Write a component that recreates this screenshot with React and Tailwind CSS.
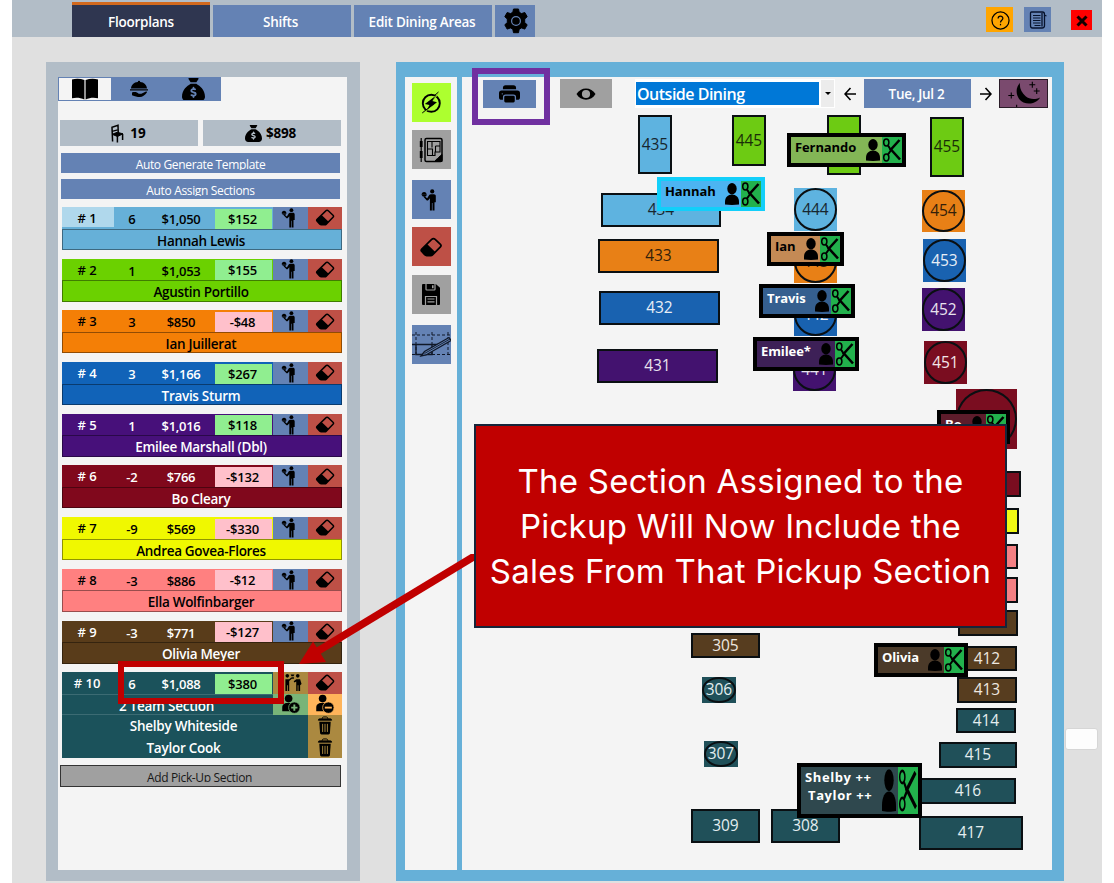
import React from "react";
import { FaSackDollar } from "react-icons/fa6";
import { BsPrinterFill } from "react-icons/bs";

const Waiter = ({ className }) => (
  <svg viewBox="0 0 16 22" className={className} fill="#000">
    <circle cx="11.2" cy="2.4" r="2.1" />
    <path d="M.5 5.700c.1-1.700 1-2.700 2.600-2.800 1.600.1 2.500 1.100 2.600 2.800z" />
    <path d="M.5 5.700h5.400l-1 1.700H1.800z" />
    <path d="M3.200 7l3 2.300 2-3.200c.4-.6 1-.9 1.700-.9h3c1.200 0 1.900.7 1.900 1.900v6.200h-1.300V21.500h-2V14h-.6v7.500h-2V9.200L7 11.400H5.800L2.600 8z" />
  </svg>
);
const Eraser = ({ className }) => (
  <svg viewBox="0 0 24 21" className={className}>
    <path d="M12.700 2.600 2.300 12.700c-.8.800-.8 1.700 0 2.500l3.300 3.500c.5.600 1.100.8 1.800.8h4.400c.7 0 1.300-.3 1.800-.8l8.300-8.400c.8-.8.8-1.800 0-2.600l-5.500-5.200c-1.100-1-2.600-1-3.700.100z" fill="none" stroke="#000" strokeWidth="1.800" strokeLinejoin="round" />
    <path d="M7.800 7.300 2.300 12.700c-.8.800-.8 1.700 0 2.500l3.300 3.500c.5.600 1.100.8 1.800.8h4.400c.7 0 1.300-.3 1.800-.8l2.900-2.900z" fill="#000" />
  </svg>
);
const Gear = () => (
  <svg viewBox="0 0 26 26" className="h-[26px] w-[26px]">
    <path d="M10.500 1h5l.7 3.300 2.300 1.300 3.300-1.100 2.400 4.200-2.500 2.300v3.600l2.500 2.200-2.400 4.300-3.300-1.200-2.300 1.300-.7 3.500h-5l-.7-3.500-2.300-1.300-3.300 1.200-2.400-4.300 2.500-2.200V11L1.800 8.700l2.400-4.200 3.300 1.100 2.300-1.300z" fill="#000" strokeLinejoin="round" stroke="#000" strokeWidth="1" />
    <circle cx="13" cy="13" r="4.400" fill="none" stroke="#6482b4" strokeWidth="1.200" />
  </svg>
);
const Book = () => (
  <svg viewBox="0 0 28 22" className="h-[22px] w-[28px]">
    <path d="M1 1.500C5 .2 9.500.5 13.400 2v19.500C9.500 19.700 5 19.400 1 20.300zM27 1.500C23 .2 18.500.5 14.600 2v19.500c3.900-1.800 8.400-2.100 12.400-1.200z" />
  </svg>
);
const Dish = () => (
  <svg viewBox="0 0 20 18" className="h-[18px] w-[20px]">
    <path d="M2 8.500C2.300 4.800 5 2.300 8.800 2a1.200 1.200 0 0 1 2.400 0c3.800.3 6.500 2.800 6.800 6.500zM1 9.300h18v1.200H1zM3 12.500c3-.9 5-.4 6.700 1.200h2.600l4.700-2.200c.9 0 1.200.6.700 1.200-1.900 2.300-4.200 4.300-6.700 4.300-2.800 0-5.200-.8-8-1.800z" />
  </svg>
);
const Chair = () => (
  <svg viewBox="0 0 14 19" className="h-[19px] w-[14px]" fill="none" stroke="#000">
    <path d="M2.600 17.500 2 3.300 8 1.200l.3 9" strokeWidth="1.500" />
    <path d="M2 7.300 7.800 5.800" strokeWidth="1.200" />
    <path d="m2.200 10.300 5-2 5.800 1.500-5.500 2.700z" fill="#000" strokeWidth="1" />
    <path d="M7.400 12v6.500M12.600 10v6" strokeWidth="1.500" />
  </svg>
);
const Eye = () => (
  <svg viewBox="0 0 20 14" className="h-[14px] w-[20px]">
    <path d="M.5 7C4.500-.5 15.500-.5 19.500 7c-4 7.500-15 7.500-19 0z" />
    <circle cx="10" cy="7" r="4.100" fill="#a0a0a0" />
    <circle cx="10" cy="7" r="1.300" fill="#a0a0a0" />
  </svg>
);
const Flash = () => (
  <svg viewBox="0 0 24 24" className="h-[24px] w-[24px]">
    <circle cx="12.300" cy="12.300" r="8.500" fill="none" stroke="#000" strokeWidth="1.900" />
    <path d="M20.500 1.500 8 12.800l3.800.9L4 22.500 17.300 12l-4.500-1z" stroke="#adff2f" strokeWidth=".8" />
    <path d="M15.500 5.800 5.800 13l4.700 1.100-2.300 4.200 9.800-7-4.800-1.400z" />
    <path d="m15 5 4.500-4M8.700 17.500 3.200 22" stroke="#000" strokeWidth="1" />
  </svg>
);
const Plan = () => (
  <svg viewBox="0 0 26 26" className="h-[26px] w-[26px]" fill="none" stroke="#000">
    <path d="M3.200 1v24" strokeWidth="1.200" />
    <path d="M3.200 4v6M3.200 14v7" strokeWidth="2.800" />
    <rect x="7" y="1.500" width="17" height="23" rx="1.500" strokeWidth="1.500" />
    <path d="M9.500 4.500h12.500v10.500h-5v3.500H9.500zM14 4.500v6M9.500 12h5v6M17.500 9v6M17.500 9h4.500" strokeWidth="1.100" />
    <path d="M24 17.500v7h-7c1-3 3.500-2.800 4-4.500z" fill="#000" />
  </svg>
);
const Floppy = () => (
  <svg viewBox="0 0 20 23" className="h-[23px] w-[20px]">
    <path d="M1 2.300C1 1.400 1.500 1 2.300 1h12.500L19 4.800v15.900c0 .9-.5 1.300-1.300 1.300H2.300C1.500 22 1 21.600 1 20.700z" />
    <path d="M5 1v5.200c0 .5.300.8.800.8h7.400c.5 0 .8-.3.800-.8V1" fill="none" stroke="#a0a0a0" strokeWidth="1.200" />
    <path d="M11 2.200h1.600v3H11z" fill="#a0a0a0" />
    <path d="M4.500 22v-8.500h11V22M6.500 16h7M6.500 18.800h7" fill="none" stroke="#a0a0a0" strokeWidth="1.200" />
  </svg>
);
const DrawPlan = () => (
  <svg viewBox="0 0 39 39" className="h-[39px] w-[39px]" fill="none" stroke="#101828">
    <path d="M0 10h39M0 29.500h39M4 7v25M20 7v25M36 7v25" strokeWidth="1" strokeDasharray="3 2" />
    <path d="M0 19.500h28M4 19.500v10h16V19.500" strokeWidth="1.400" />
    <path d="M9 31l3.500-4.500L37 12.500l2 3L14 30z" fill="#6482b4" strokeWidth="1.300" />
    <path d="M12.500 28.500 38 14" strokeWidth=".9" />
  </svg>
);
const Moon = () => (
  <svg viewBox="0 0 48 28" className="h-[28px] w-[48px]">
    <path d="M20.500 2.500c-4.500 4.500-4.500 12-1 16.500 5 6.500 16.500 6.500 21.500-1.500-5 2.500-11 2.200-14.800-1.200C22 12.300 19.500 7.500 20.500 2.500z" />
    <path d="M11.500 12.500v6M8.500 15.500h6M33 1.500v6M30 4.500h6M37.500 8v6M34.500 11h6M17 25v3" stroke="#000" strokeWidth="1.100" />
  </svg>
);
const Person = ({ className }) => (
  <svg viewBox="0 0 14 23" preserveAspectRatio="none" className={className}>
    <ellipse cx="7" cy="6" rx="4.700" ry="5.900" />
    <path d="M0 22.500v-3C0 15 3 12 7 12s7 3 7 7.500v3C10 23 4 23 0 22.500z" />
  </svg>
);
const Scissors = ({ className }) => (
  <svg viewBox="0 0 20 26" preserveAspectRatio="none" className={className} fill="none" stroke="#000">
    <ellipse cx="4.300" cy="5.500" rx="2.600" ry="3.400" strokeWidth="1.500" />
    <ellipse cx="4.300" cy="20.500" rx="2.600" ry="3.400" strokeWidth="1.500" />
    <path d="m6 8.500 3.500 5.500M6 17.500l3.500-5" strokeWidth="2" />
    <path d="M8 13.500 17.500 3M8.500 12 18 22.500" strokeWidth="2.600" />
  </svg>
);
const Trash = () => (
  <svg viewBox="0 0 16 20" className="h-[19px] w-[16px]">
    <path d="M1 4.500c0-1 .5-1.500 1.500-1.500h11c1 0 1.500.5 1.500 1.500z" fill="#000" stroke="#000" strokeWidth=".8" />
    <path d="M5 3c0-1.300.6-2 1.800-2h2.400C10.400 1 11 1.700 11 3" fill="none" stroke="#000" strokeWidth="1" />
    <path d="M2 6h12l-.8 12c-.1.900-.6 1.400-1.500 1.400H4.300c-.9 0-1.400-.5-1.500-1.400z" />
    <path d="M5.500 8.300v8.500M8 8.300v8.500M10.500 8.300v8.500" stroke="#ab8940" strokeWidth="1" />
  </svg>
);
const UserBadge = ({ minus, color }) => (
  <svg viewBox="0 0 20 21" className="h-[20px] w-[20px]">
    <circle cx="7.500" cy="4.800" r="4" />
    <path d="M.8 18v-3.500C.8 11 3 9.500 6 9.500h3.500c3 0 4.700 1.500 4.700 5V18z" />
    <circle cx="13.500" cy="14.300" r="6" stroke={color} strokeWidth=".8" />
    <path d={minus ? "M9.800 14.300h7.400" : "M10.200 14.300h6.600M13.500 11v6.600"} stroke={color} strokeWidth="2" />
  </svg>
);
const Team = () => (
  <svg viewBox="0 0 20 20" className="h-[19px] w-[20px]">
    <circle cx="4" cy="3" r="1.900" /><circle cx="15" cy="3" r="1.900" />
    <path d="M2 6.500h4l2.500-2 .8 1-3.300 3V19h-1.500v-6h-.8v6H2zM17.500 6.500h-4l-2.800 2.200.8 1.300 1.900-1V19h1.500v-6h.8v6h1.800v-6l1.500-1.500z" />
    <path d="M7.500 1.500h4L10.500 3.500h-2zM9 4.500h2v1.500H9z" />
  </svg>
);

const sections = [
  ["# 1", "6", "$1,050", "$152", "Hannah Lewis", "bg-[#66b0d8] text-black"],
  ["# 2", "1", "$1,053", "$155", "Agustin Portillo", "bg-[#6bd100] text-black"],
  ["# 3", "3", "$850", "-$48", "Ian Juillerat", "bg-[#f47f06] text-black"],
  ["# 4", "3", "$1,166", "$267", "Travis Sturm", "bg-[#1163b8] text-white"],
  ["# 5", "1", "$1,016", "$118", "Emilee Marshall (Dbl)", "bg-[#47107a] text-white"],
  ["# 6", "-2", "$766", "-$132", "Bo Cleary", "bg-[#80081c] text-white"],
  ["# 7", "-9", "$569", "-$330", "Andrea Govea-Flores", "bg-[#f0f800] text-black"],
  ["# 8", "-3", "$886", "-$12", "Ella Wolfinbarger", "bg-[#ff8080] text-black"],
  ["# 9", "-3", "$771", "-$127", "Olivia Meyer", "bg-[#593c1a] text-white"],
];

function SectionHead({ s, team, first }) {
  return (
    <div className="flex h-[21.5px] leading-[21px]">
      <div className={"w-[52px] shrink-0 pr-[2px] pt-px text-center " + (first ? "h-[20px] bg-[#b0d8ec]" : "")}>{s[0]}</div>
      <div className="w-[36px] shrink-0 pt-0.5 text-center">{s[1]}</div>
      <div className="w-[65px] shrink-0 pr-[3px] pt-0.5 text-center tracking-[-0.3px]">{s[2]}</div>
      <div className={"mt-[1.500px] h-[20px] w-[57px] shrink-0 pr-[2px] text-center text-black tracking-[-0.2px] " + (s[3][0] === "-" ? "bg-[#ffc0cb]" : "bg-[#90ee90]")}>{s[3]}</div>
      <div className={"ml-[1px] flex w-[35px] shrink-0 items-center justify-center " + (team ? "bg-[#ab8940] pl-1" : "bg-[#6482b4] pr-1")}>
        {team ? <Team /> : <Waiter className="h-[20px] w-[15px]" />}
      </div>
      <div className="flex flex-1 items-center justify-center bg-[#be5046]"><Eraser className="mr-px h-[17px] w-[20px]" /></div>
    </div>
  );
}

const B = "bg-[#5eb3e0] text-[#17262e]", G = "bg-[#6dcb13] text-[#1a2e08]", O = "bg-[#e88016] text-[#33200a]",
  N = "bg-[#1962b0] text-[#e8eef6]", P = "bg-[#43126f] text-[#e8e2ee]", M = "bg-[#7a0d20] text-[#f2e6e8]",
  Y = "bg-[#f0f814]", K = "bg-[#f48084]", W = "bg-[#573d1f] text-[#eee8e0]", T = "bg-[#205059] text-[#e4eef0]";
/* label, x, y, width, height, colour, round */
const tables = [
  ["435", 638, 115, 34, 59, B], ["445", 732, 115, 34, 51, G], ["", 827, 115, 34, 60, G], ["455", 930, 117, 34, 60, G],
  ["434", 601, 193, 120, 34, B], ["433", 598, 239, 121, 34, O], ["432", 599, 291, 121, 34, N], ["431", 597, 349, 121, 34, P],
  ["444", 794, 188, 43, 43, B, 1], ["443", 794, 240, 43, 43, O, 1], ["442", 794, 293, 43, 43, N, 1], ["441", 793, 348, 43, 43, P, 1],
  ["454", 922, 190, 43, 42, O, 1], ["453", 923, 239, 43, 43, N, 1], ["452", 922, 288, 43, 43, P, 1], ["451", 924, 341, 43, 43, M, 1],
  ["", 956, 389, 61, 60, M, 1], ["", 960, 471, 61, 26, M], ["", 959, 508, 60, 26, Y], ["", 958, 544, 60, 25, K], ["", 958, 577, 60, 26, K],
  ["411", 958, 610, 60, 26, W], ["412", 957, 646, 60, 25, W], ["413", 957, 677, 60, 26, W], ["414", 956, 708, 60, 25, T],
  ["415", 939, 742, 78, 26, T], ["416", 920, 778, 96, 26, T], ["417", 919, 816, 104, 34, T],
  ["305", 691, 633, 69, 25, W], ["306", 702, 677, 34, 26, T, 1], ["307", 704, 741, 34, 26, T, 1],
  ["309", 691, 809, 69, 34, T], ["308", 771, 809, 69, 34, T],
];
const tags = [
  [["Fernando"], 787, 133, 119, 34, "border-black bg-[#83b656] text-black"],
  [["Hannah"], 657, 177, 108, 34, "border-[#12cffa] bg-[#4cb4f2] text-black"],
  [["Ian"], 767, 232, 77, 34, "border-black bg-[#c48a55] text-black"],
  [["Travis"], 759, 284, 96, 34, "border-black bg-[#355f8f] text-white"],
  [["Emilee*"], 753, 337, 106, 34, "border-black bg-[#3d2057] text-white"],
  [["Bo"], 937, 410, 73, 34, "border-black bg-[#5d1c2b] text-white"],
  [["Olivia"], 874, 643, 94, 34, "border-black bg-[#4b3a29] text-white"],
  [["Shelby ++", "Taylor ++"], 797, 763, 125, 55, "border-black bg-[#2f484e] text-white"],
];

function FloorMap() {
  return (
    <div className="absolute inset-0">
      {tables.map(([n, x, y, w, h, c, round], i) => (
        <div key={i} style={{ left: x - 462, top: y - 77, width: w, height: h }}
          className={"absolute flex items-center justify-center text-[15.500px] tracking-[-0.1px] " + c + (round ? "" : " border-2 border-[#0a0f12]")}>
          {round ? <div className="absolute inset-0 rounded-[50%] border-2 border-[#0a0f12]" /> : null}
          <span className="relative">{n}</span>
        </div>
      ))}
      {tags.map(([names, x, y, w, h, c]) => (
        <div key={names[0]} style={{ left: x - 462, top: y - 77, width: w, height: h }}
          className={"absolute flex border-4 text-[13px] font-bold leading-[18px] " + c}>
          <div className={"flex-1 whitespace-pre pl-[4px] pt-px text-left " + (names[1] ? "tracking-[0.6px]" : "tracking-[-0.1px]")}>
            {names.map((n, i) => <div key={n} className={i ? "pl-[3px]" : ""}>{n}</div>)}
          </div>
          <div className="flex w-[16px] shrink-0 py-0.5"><Person className="h-full w-[14px]" /></div>
          <div className="w-[20px] shrink-0 bg-[#22b14c]"><Scissors className="h-full w-full" /></div>
        </div>
      ))}
    </div>
  );
}

const tab = "flex h-[32px] w-[138px] items-center justify-center bg-[#6482b4] pt-[2px]";
const tool = "flex h-[39px] w-[39px] items-center justify-center ";
const clipped = "h-[16.500px] overflow-hidden pt-[2px] text-center text-[12px] leading-[20px] tracking-[-0.35px] ";

export default function App() {
  return (
    <div className="relative flex h-[883px] w-[1114px] justify-center overflow-hidden bg-white font-['Open_Sans','Noto_Sans',sans-serif]">
      <div className="flex w-[1090px] flex-col bg-[#e0e0e0]">
        <header className="flex h-[37px] shrink-0 justify-between bg-[#b2bdc7] pl-[60px] pr-[10px]">
          <nav className="flex items-end text-[13.500px] font-semibold tracking-[-0.25px] text-white">
            <div className="mr-[3px] flex h-[35px] w-[138px] items-center justify-center border-t-[3px] border-[#d2691e] bg-[#2f3650] pt-[2px]">Floorplans</div>
            <div className={tab + " mr-[3px] pr-[3px]"}>Shifts</div>
            <div className={tab + " mr-[3px] whitespace-nowrap pr-[2px]"}>Edit Dining Areas</div>
            <div className="flex h-[32px] w-[40px] items-center justify-center bg-[#6482b4] pl-px"><Gear /></div>
          </nav>
          <div className="flex pt-[7px]">
            <div className="mr-[11px] flex h-[25px] w-[27px] items-center justify-center bg-[#ffa500] pt-px pl-px">
              <svg viewBox="0 0 20 20" className="h-[19px] w-[19px]" fill="none" stroke="#000" strokeWidth="1.300"><circle cx="10" cy="10" r="9" /><path d="M7.500 8c0-3.500 5-3.300 5-.3 0 2-2.500 2-2.500 4.300" /><path d="M10 13.500v1.600" /></svg>
            </div>
            <div className="mr-[20px] flex h-[25px] w-[27px] items-center justify-center bg-[#6482b4]">
              <svg viewBox="0 0 18 18" className="h-[18px] w-[18px]" fill="none" stroke="#07122c" strokeWidth="1.300"><path d="M2.500 1h11c1.500 0 2 1 2 2.500v11c0 1.700-1 2.500-2.500 2.500H3.500C2 17 1.500 16 1.500 14.500V2c0-.6.400-1 1-1z" /><path d="M13 2v13.500M15 4l2.500 1" /><path d="M4 4.500h7.500M4 7h7.500M4 9.500h7.500M4 12h7.500M5.500 14.500h6" strokeWidth="1.100" /></svg>
            </div>
            <div className="mt-[3px] flex h-[20px] w-[21px] items-center justify-center bg-[#ff0000] pt-[2px]">
              <svg viewBox="0 0 12 12" className="h-[12px] w-[12px]" stroke="#100" strokeWidth="3"><path d="m1.500 1.500 9 9M10.500 1.500l-9 9" /></svg>
            </div>
          </div>
        </header>

        <main className="flex flex-1 pl-[34px] pt-[25px]">
          <aside className="flex h-[819px] w-[314px] flex-col border-b-[11px] border-l-[12px] border-r-[13px] border-t-[15px] border-[#b2bdc7] bg-[#f4f4f4]">
            <div className="flex h-[24px] w-[163px] border border-[#6482b4] bg-[#6482b4]">
              <div className="flex w-[52px] justify-center bg-[#f4f4f4]"><Book /></div>
              <div className="flex w-[56px] items-center justify-center"><Dish /></div>
              <div className="flex w-[53px] justify-center overflow-hidden"><FaSackDollar className="h-[23px] w-[23px] shrink-0 text-black" /></div>
            </div>
            <div className="mt-[19px] flex gap-[5px] pl-[2px] text-[13.500px] font-bold text-black">
              <div className="flex h-[26px] w-[138px] items-center justify-center gap-[6px] bg-[#b2bdc7] pr-[2px] pt-px"><Chair />19</div>
              <div className="flex h-[26px] w-[138px] items-center justify-center gap-[4px] bg-[#b2bdc7] pr-[3px] pt-px tracking-[-0.2px]"><FaSackDollar className="h-[17px] w-[17px]" />$898</div>
            </div>
            <div className="ml-[3px] mt-[7px] h-[20px] w-[279px] bg-[#6482b4]">
              <div className={clipped + "text-white"}>Auto Generate Template</div>
            </div>
            <div className="ml-[3px] mt-[6px] h-[20px] w-[279px] bg-[#6482b4]">
              <div className={clipped + "text-white"}>Auto Assign Sections</div>
            </div>
            <div className="ml-[4px] mt-[8px] flex w-[280px] flex-col gap-[8.700px] text-[13px] font-semibold">
              {sections.map((s, i) => (
                <section key={s[0]} className={"h-[43px] " + s[5]}>
                  <SectionHead s={s} first={i === 0} />
                  <div className="h-[21.500px] border border-black/40 pr-[2px] text-center text-[13.500px] leading-[22px] tracking-[-0.3px]">{s[4]}</div>
                </section>
              ))}
              <section className="h-[86px] bg-[#1b525b] text-[13.500px] tracking-[-0.25px] text-white">
                <div className="text-[13px] tracking-normal"><SectionHead s={["# 10", "6", "$1,088", "$380"]} team /></div>
                <div className="flex h-[21.500px]">
                  <div className="flex-1 border-y border-white/15 pr-[2px] text-center leading-[22px]">2 Team Section</div>
                  <div className="flex w-[35px] items-center justify-center bg-[#78b478]"><UserBadge color="#78b478" /></div>
                  <div className="flex w-[34px] items-center justify-center bg-[#ffb45a]"><UserBadge minus color="#ffb45a" /></div>
                </div>
                {["Shelby Whiteside", "Taylor Cook"].map((n) => (
                  <div key={n} className="flex h-[21.500px]">
                    <div className="flex-1 pr-[3px] text-center leading-[23px]">{n}</div>
                    <div className="flex w-[34px] items-center justify-center bg-[#ab8940]"><Trash /></div>
                  </div>
                ))}
              </section>
            </div>
            <div className="ml-[2px] mt-[6.500px] h-[22px] w-[281px] border border-[#333] bg-[#a0a0a0]">
              <div className={clipped + "pr-[2px] text-[#181818]"}>Add Pick-Up Section</div>
            </div>
          </aside>

          <section className="ml-[36px] flex h-[819px] w-[668px] gap-[5px] border-b-[11px] border-l-[9px] border-r-[12px] border-t-[15px] border-[#66b0d8] bg-[#66b0d8]">
            <div className="flex w-[52px] flex-col items-center bg-[#f4f4f4] pt-[6px]">
              <div className={tool + "mb-[8px] bg-[#adff2f]"}><Flash /></div>
              <div className={tool + "mb-[11px] bg-[#a0a0a0]"}><Plan /></div>
              <div className={tool + "mb-[8px] bg-[#6482b4] pr-1"}><Waiter className="h-[22px] w-[16px]" /></div>
              <div className={tool + "mb-[9px] bg-[#be5046]"}><Eraser className="h-[20px] w-[24px]" /></div>
              <div className={tool + "mb-[11px] bg-[#a0a0a0]"}><Floppy /></div>
              <div className={tool + "bg-[#6482b4]"}><DrawPlan /></div>
            </div>
            <div className="relative flex-1 bg-[#f4f4f4]">
              <FloorMap />
              <div className="relative flex h-[32px] items-start pl-[21px] pt-[2px]">
                <div className="mt-px flex h-[28px] w-[53px] items-center justify-center bg-[#6482b4] pt-px"><BsPrinterFill className="h-[21px] w-[21px] text-black" /></div>
                <div className="ml-[24px] flex h-[29px] w-[52px] items-center justify-center bg-[#a0a0a0]"><Eye /></div>
                <div className="ml-[23px] flex h-[29px] w-[200px] items-center bg-white pl-px">
                  <div className="h-[23px] w-[183px] bg-[#0078d7] pl-px text-[16px] font-semibold leading-[24px] tracking-[-0.5px] text-white">Outside Dining</div>
                  <div className="ml-[2px] flex h-[27px] w-[13px] items-center justify-center bg-[#ececec]"><div className="border-x-[3px] border-t-[3px] border-x-transparent border-t-black" /></div>
                </div>
                <svg viewBox="0 0 12 14" className="ml-[9px] mt-[8px] h-[14px] w-[12px]" fill="none" stroke="#000" strokeWidth="1.600"><path d="M12 7H1M6.500 1 1 7l5.500 6" /></svg>
                <div className="ml-[8px] flex h-[29px] w-[107px] items-center justify-center bg-[#6482b4] pr-[2px] pt-[2px] text-[13.500px] font-semibold tracking-[-0.3px] text-white">Tue, Jul 2</div>
                <svg viewBox="0 0 12 14" className="ml-[9px] mt-[8px] h-[14px] w-[12px]" fill="none" stroke="#000" strokeWidth="1.600"><path d="M0 7h11M5.500 1 11 7l-5.500 6" /></svg>
                <div className="ml-[7px] flex h-[29px] w-[49px] items-center justify-center overflow-hidden border border-[#2a1c28] bg-[#7a4a6e]"><Moon /></div>
              </div>
            </div>
          </section>
        </main>
      </div>

      <div className="absolute left-[1065px] top-[728px] h-[22px] w-[33px] rounded-[3px] border border-[#d6d6d6] bg-[#fdfdfd]" />
      <div className="absolute left-[472px] top-[68px] h-[57px] w-[78px] border-[6px] border-[#7030a0]" />
      <div className="absolute left-[118px] top-[661px] h-[43px] w-[166px] border-[6px] border-[#c00000]" />
      <svg viewBox="0 0 180 112" className="absolute left-[298px] top-[554px] h-[112px] w-[180px]">
        <path d="M180 0 20 97" stroke="#c00000" strokeWidth="7.500" />
        <path d="M1 110 15 87.500 28 108z" fill="#c00000" />
      </svg>
      <div className="absolute left-[474px] top-[424px] flex h-[204px] w-[533px] flex-col items-center justify-center whitespace-nowrap border-2 border-[#16253a] bg-[#c00000] font-[Inter,sans-serif] text-[33px] leading-[45px] tracking-[0.26px] text-white">
        <div>The Section Assigned to the</div>
        <div>Pickup Will Now Include the</div>
        <div>Sales From That Pickup Section</div>
      </div>
    </div>
  );
}
